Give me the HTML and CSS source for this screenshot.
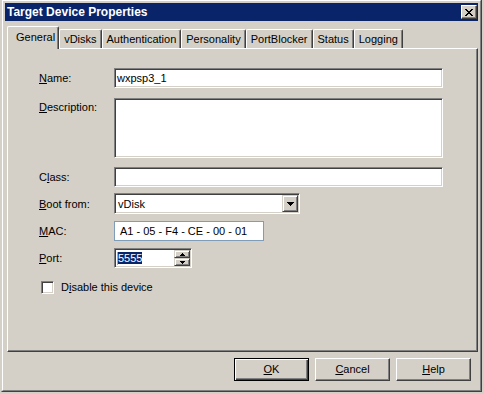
FILE: index.html
```html
<!DOCTYPE html>
<html lang="en">
<head>
    <meta charset="UTF-8">
    <title>Target Device Properties</title>
    <link rel="stylesheet" href="styles.css">
</head>
<body>

<div class="window">
  <div class="frame">

    <div class="titlebar">
        <span class="title">Target Device Properties</span>
        <span class="close-btn">
            <svg width="8" height="7" viewBox="0 0 8 7" shape-rendering="crispEdges">
                <path fill="#000" d="M0 0h2v1h-2z M6 0h2v1h-2z M1 1h2v1h-2z M5 1h2v1h-2z M2 2h4v1h-4z M3 3h2v1h-2z M2 4h4v1h-4z M1 5h2v1h-2z M5 5h2v1h-2z M0 6h2v1h-2z M6 6h2v1h-2z"/>
            </svg>
        </span>
    </div>

    <div class="tabs">
        <div class="tab active">General</div>
        <div class="tab">vDisks</div>
        <div class="tab">Authentication</div>
        <div class="tab">Personality</div>
        <div class="tab">PortBlocker</div>
        <div class="tab">Status</div>
        <div class="tab">Logging</div>
    </div>

    <div class="panel">
        <div class="row">
            <div class="lbl"><u>N</u>ame:</div>
            <div class="edit w-full">wxpsp3_1</div>
        </div>
        <div class="row gap-10">
            <div class="lbl lbl-top"><u>D</u>escription:</div>
            <div class="edit w-full memo"></div>
        </div>
        <div class="row gap-9">
            <div class="lbl">C<u>l</u>ass:</div>
            <div class="edit w-full"></div>
        </div>
        <div class="row gap-6">
            <div class="lbl lbl-boot"><u>B</u>oot from:</div>
            <div class="edit combo">
                <span class="combo-text">vDisk</span>
                <span class="drop-btn">
                    <svg width="7" height="4" viewBox="0 0 7 4" shape-rendering="crispEdges">
                        <path fill="#000" d="M0 0h7v1h-1v1h-1v1h-1v1h-1v-1h-1v-1h-1v-1h-1z"/>
                    </svg>
                </span>
            </div>
        </div>
        <div class="row">
            <div class="lbl"><u>M</u>AC:</div>
            <div class="mac">A1 - 05 - F4 - CE - 00 - 01</div>
        </div>
        <div class="row">
            <div class="lbl"><u>P</u>ort:</div>
            <div class="edit spin">
                <span class="spin-value"><span class="caret"></span><span class="selected">5555</span></span>
                <span class="spin-btns">
                    <span class="spin-btn">
                        <svg width="5" height="3" viewBox="0 0 5 3" shape-rendering="crispEdges">
                            <path fill="#000" d="M2 0h1v1h1v1h1v1h-5v-1h1v-1h1z"/>
                        </svg>
                    </span>
                    <span class="spin-btn">
                        <svg width="5" height="3" viewBox="0 0 5 3" shape-rendering="crispEdges">
                            <path fill="#000" d="M0 0h5v1h-1v1h-1v1h-1v-1h-1v-1h-1z"/>
                        </svg>
                    </span>
                </span>
            </div>
        </div>
        <div class="row gap-12 check-row">
            <span class="checkbox"></span>
            <span class="check-label">D<u>i</u>sable this device</span>
        </div>
    </div>

    <div class="buttons">
        <div class="btn btn-default"><span><u>O</u>K</span></div>
        <div class="btn"><span><u>C</u>ancel</span></div>
        <div class="btn"><span><u>H</u>elp</span></div>
    </div>

  </div>
</div>

</body>
</html>
```

FILE: styles.css
```css
body {
    margin: 0;
    background-color: #d4d0c8;
    font-family: "Liberation Sans", Arial, sans-serif;
    font-size: 11px;
    line-height: 13px;
    color: #000;
}
u {
    text-underline-offset: 1px;
}

/* Window frame */
.window {
    width: 481px;
    height: 393px;
    margin: -1px 0 0 1px;
    box-sizing: border-box;
    border: 1px solid;
    border-color: #d4d0c8 #404040 #404040 #d4d0c8;
    background-color: #d4d0c8;
}
.frame {
    height: 100%;
    box-sizing: border-box;
    border: 1px solid;
    border-color: #fff #808080 #808080 #fff;
    padding: 2px;
    display: flex;
    flex-direction: column;
}
.titlebar {
    height: 18px;
    flex-shrink: 0;
    background-color: #0a246a;
    color: #fff;
    display: flex;
    align-items: center;
    justify-content: space-between;
    padding: 0 1px 0 2px;
}
.title {
    font-weight: bold;
    font-size: 12px;
    padding-top: 1px;
}
.close-btn {
    width: 16px;
    height: 14px;
    box-sizing: border-box;
    border: 1px solid;
    border-color: #fff #404040 #404040 #fff;
    box-shadow: inset -1px -1px #808080;
    background-color: #d4d0c8;
    display: flex;
    align-items: center;
    justify-content: center;
}
.close-btn svg {
    display: block;
}

/* Tabs */
.tabs {
    display: flex;
    align-items: flex-end;
    height: 23px;
    flex-shrink: 0;
    margin: 5px 0 0 2px;
}
.tab {
    height: 19px;
    box-sizing: border-box;
    margin-bottom: 1px;
    padding: 3px 4px 0 4px;
    border-top: 1px solid #fff;
    border-left: 1px solid #fff;
    border-right: 1px solid #404040;
    border-radius: 2px 2px 0 0;
    box-shadow: inset -1px 0 #808080;
    white-space: nowrap;
}
.tab.active {
    height: 23px;
    margin-bottom: 0;
    padding: 4px 3px 0 8px;
    position: relative;
    z-index: 1;
    background-color: #d4d0c8;
}

/* Tab page */
.panel {
    height: 304px;
    flex-shrink: 0;
    box-sizing: border-box;
    margin: -1px 0 0 2px;
    padding: 19px 0 0 31px;
    border: 1px solid;
    border-color: #fff #404040 #404040 #fff;
    box-shadow: inset -1px -1px #808080;
}
.row {
    display: flex;
    align-items: flex-start;
    margin-top: 7px;
}
.row:first-child {
    margin-top: 0;
}
.gap-6 { margin-top: 6px; }
.gap-9 { margin-top: 9px; }
.gap-10 { margin-top: 10px; }
.gap-12 { margin-top: 12px; }

.lbl {
    width: 75px;
    flex-shrink: 0;
    padding-top: 4px;
}
.lbl-top {
    padding-top: 3px;
}
.lbl-boot {
    padding-top: 5px;
}

.edit {
    height: 20px;
    box-sizing: border-box;
    padding: 1px 2px 0 2px;
    line-height: 16px;
    background-color: #fff;
    border: 1px solid;
    border-color: #808080 #fff #fff #808080;
    box-shadow: inset 1px 1px #404040, inset -1px -1px #d4d0c8;
}
.w-full {
    width: 329px;
}
.memo {
    height: 60px;
}

.combo {
    width: 186px;
    height: 21px;
    padding: 1px;
    display: flex;
    justify-content: space-between;
}
.combo-text {
    padding: 1px 0 0 2px;
}
.drop-btn {
    width: 16px;
    height: 17px;
    box-sizing: border-box;
    border: 1px solid;
    border-color: #d4d0c8 #404040 #404040 #d4d0c8;
    box-shadow: inset 1px 1px #fff, inset -1px -1px #808080;
    background-color: #d4d0c8;
    display: flex;
    align-items: center;
    justify-content: center;
}
.drop-btn svg {
    display: block;
    margin-top: 1px;
}

.mac {
    width: 150px;
    height: 20px;
    box-sizing: border-box;
    padding: 1px 0 0 5px;
    line-height: 17px;
    background-color: #fff;
    border: 1px solid #7f9db9;
}

.spin {
    width: 78px;
    padding: 1px;
    display: flex;
    justify-content: space-between;
}
.spin-value {
    display: flex;
    align-items: center;
    padding-left: 1px;
}
.caret {
    width: 1px;
    height: 13px;
    background-color: #e0b000;
}
.selected {
    background-color: #0a246a;
    color: #fff;
    line-height: 12px;
    height: 12px;
}
.spin-btns {
    display: flex;
    flex-direction: column;
}
.spin-btn {
    width: 16px;
    height: 8px;
    box-sizing: border-box;
    border: 1px solid;
    border-color: #d4d0c8 #404040 #404040 #d4d0c8;
    box-shadow: inset 1px 1px #fff, inset -1px -1px #808080;
    background-color: #d4d0c8;
    display: flex;
    align-items: center;
    justify-content: center;
}
.spin-btn svg {
    display: block;
}

.check-row {
    align-items: center;
    padding-left: 2px;
}
.checkbox {
    width: 13px;
    height: 13px;
    box-sizing: border-box;
    background-color: #fff;
    border: 1px solid;
    border-color: #808080 #fff #fff #808080;
    box-shadow: inset 1px 1px #404040, inset -1px -1px #d4d0c8;
}
.check-label {
    margin-left: 7px;
    padding-top: 1px;
}

/* Dialog buttons */
.buttons {
    display: flex;
    justify-content: flex-end;
    gap: 6px;
    margin-top: 6px;
    padding-right: 7px;
}
.btn {
    width: 75px;
    height: 23px;
    box-sizing: border-box;
    border: 1px solid;
    border-color: #fff #404040 #404040 #fff;
    box-shadow: inset -1px -1px #808080;
    display: flex;
    align-items: center;
    justify-content: center;
}
.btn-default {
    border-color: #000;
    box-shadow: inset 1px 1px #fff, inset -1px -1px #404040, inset -2px -2px #808080;
}
```
